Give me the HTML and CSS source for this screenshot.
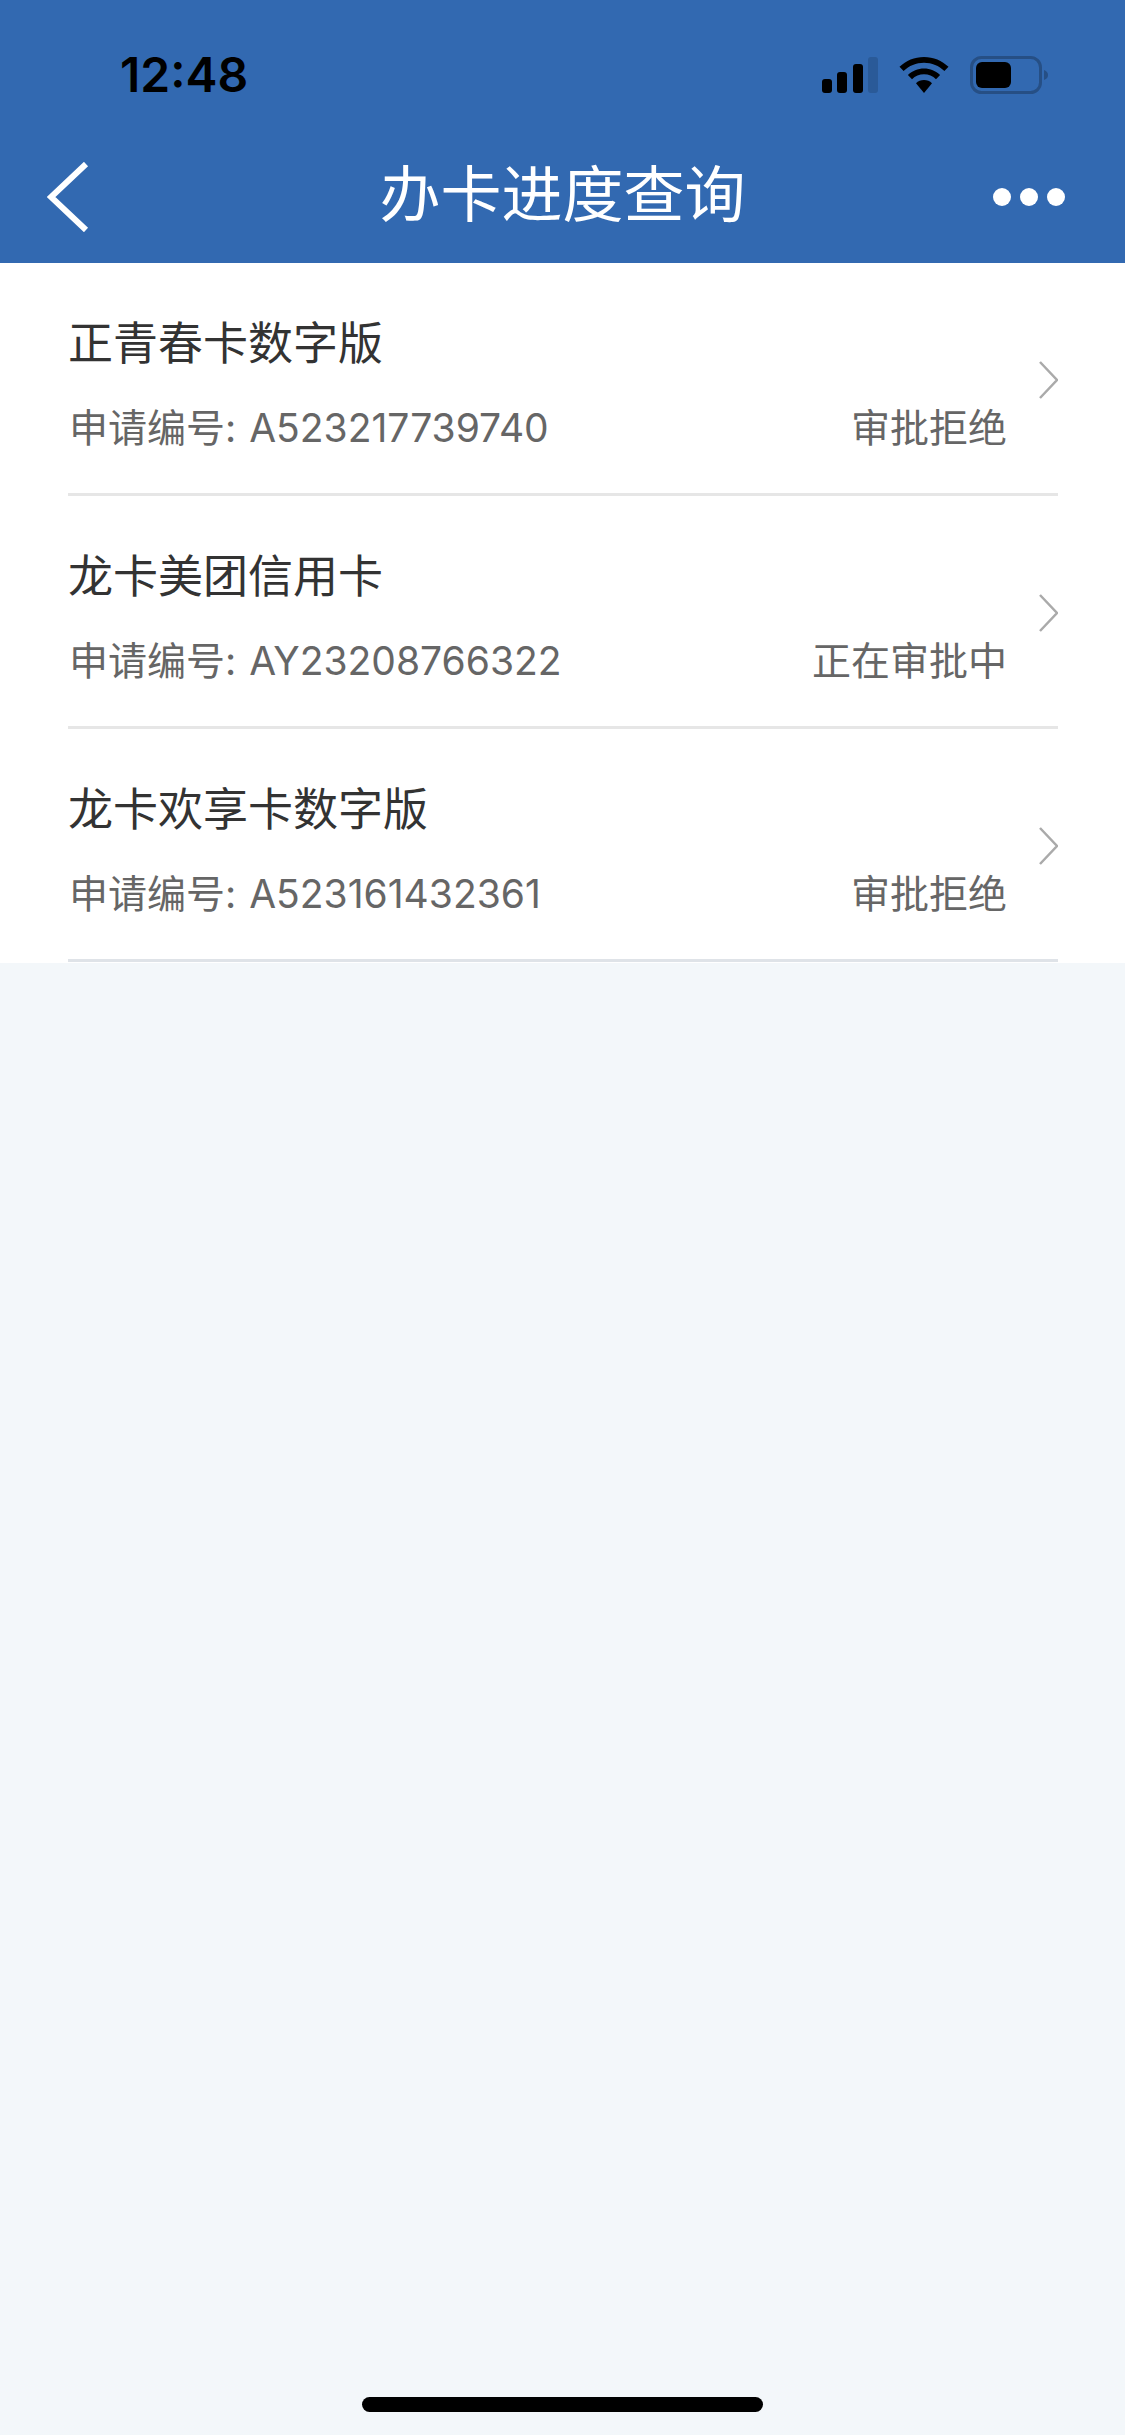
FILE: index.html
```html
<!DOCTYPE html>
<html lang="zh-CN">
<head>
  <meta charset="UTF-8">
  <title>办卡进度查询</title>
  <link rel="stylesheet" href="styles.css">
</head>
<body>
  <div class="page">
    <header class="header">
      <div class="status-bar">
        <span class="time">12:48</span>
        <div class="status-icons">
          <svg class="signal" width="56" height="36" viewBox="0 0 56 36">
            <rect x="0" y="22" width="10" height="14" rx="3" fill="#000"/>
            <rect x="15" y="15" width="10" height="21" rx="3" fill="#000"/>
            <rect x="31" y="7" width="10" height="29" rx="3" fill="#000"/>
            <rect x="46" y="0" width="10" height="36" rx="3" fill="#2a5a98"/>
          </svg>
          <svg class="wifi" width="50" height="36" viewBox="0 0 50 36">
            <path d="M25 0C15.500 0 7 3.700 0.500 9.800L4.600 14C10 8.900 17.200 5.800 25 5.800S40 8.900 45.400 14L49.500 9.800C43 3.700 34.500 0 25 0Z" fill="#000"/>
            <path d="M25 11.500C18.800 11.500 13.200 13.900 8.900 18L13 22.200C16.200 19.200 20.400 17.300 25 17.300S33.800 19.200 37 22.200L41.100 18C36.800 13.900 31.200 11.500 25 11.500Z" fill="#000"/>
            <path d="M25 23C21.900 23 19.100 24.100 17 26.200L25 36L33 26.200C30.900 24.100 28.100 23 25 23Z" fill="#000"/>
          </svg>
          <svg class="battery" width="79" height="38" viewBox="0 0 79 38">
            <rect x="1.500" y="1.500" width="69" height="35" rx="10" fill="none" stroke="#264f85" stroke-width="3"/>
            <rect x="6" y="6" width="35" height="26" rx="6" fill="#000"/>
            <path d="M74 14C77 15 78 17 78 19S77 23 74 24Z" fill="#264f85"/>
          </svg>
        </div>
      </div>
      <nav class="nav-bar">
        <svg class="back" width="42" height="70" viewBox="0 0 42 70">
          <path d="M39 2L4 35L39 68" fill="none" stroke="#fff" stroke-width="6"/>
        </svg>
        <h1 class="nav-title">办卡进度查询</h1>
        <div class="more">
          <span class="dot"></span>
          <span class="dot"></span>
          <span class="dot"></span>
        </div>
      </nav>
    </header>

    <ul class="list">
      <li class="item">
        <div class="item-main">
          <div class="item-name">正青春卡数字版</div>
          <div class="item-meta">
            <span class="item-no">申请编号: A523217739740</span>
            <span class="item-state">审批拒绝</span>
          </div>
        </div>
        <svg class="chevron" width="19" height="38" viewBox="0 0 19 38">
          <path d="M1 1L18 19L1 37" fill="none" stroke="#aaa" stroke-width="2.500"/>
        </svg>
      </li>
      <li class="item">
        <div class="item-main">
          <div class="item-name">龙卡美团信用卡</div>
          <div class="item-meta">
            <span class="item-no">申请编号: AY23208766322</span>
            <span class="item-state">正在审批中</span>
          </div>
        </div>
        <svg class="chevron" width="19" height="38" viewBox="0 0 19 38">
          <path d="M1 1L18 19L1 37" fill="none" stroke="#aaa" stroke-width="2.500"/>
        </svg>
      </li>
      <li class="item">
        <div class="item-main">
          <div class="item-name">龙卡欢享卡数字版</div>
          <div class="item-meta">
            <span class="item-no">申请编号: A523161432361</span>
            <span class="item-state">审批拒绝</span>
          </div>
        </div>
        <svg class="chevron" width="19" height="38" viewBox="0 0 19 38">
          <path d="M1 1L18 19L1 37" fill="none" stroke="#aaa" stroke-width="2.500"/>
        </svg>
      </li>
    </ul>

    <div class="home-bar"></div>
  </div>
</body>
</html>
```

FILE: styles.css
```css
* {
  box-sizing: border-box;
}

body {
  margin: 0;
  font-family: "Inter", "Noto Sans CJK SC", sans-serif;
  background: #f3f7fa;
}

.page {
  display: flex;
  flex-direction: column;
  height: 2435px;
  overflow: hidden;
}

.header {
  height: 263px;
  background: #3269b1;
}

.status-bar {
  display: flex;
  justify-content: space-between;
  align-items: center;
  height: 150px;
  padding: 0 76px 0 120px;
}

.time {
  padding-bottom: 2px;
  font-size: 48px;
  font-weight: 600;
  color: #000;
}

.status-icons {
  display: flex;
  align-items: center;
  gap: 21px;
}

.nav-bar {
  display: grid;
  grid-template-columns: 1fr auto 1fr;
  align-items: center;
  height: 94px;
  padding: 0 47px;
}

.back {
  display: block;
}

.nav-title {
  margin: 0;
  padding-bottom: 4px;
  font-size: 61px;
  line-height: 70px;
  font-weight: 400;
  color: #fff;
}

.more {
  display: flex;
  justify-self: end;
  gap: 9px;
  margin-right: 13px;
}

.dot {
  width: 18px;
  height: 18px;
  border-radius: 50%;
  background: #fff;
}

.list {
  list-style: none;
  margin: 0;
  padding: 0 67px 1px 68px;
  background: #fff;
}

.item {
  display: flex;
  align-items: center;
  gap: 32px;
  height: 233px;
  border-bottom: 3px solid #e6e6e6;
}

.item:last-child {
  border-bottom-color: #dfe3e8;
}

.item-main {
  flex: 1;
  padding-top: 12px;
}

.item-name {
  font-size: 45px;
  line-height: 60px;
  color: #333;
}

.item-meta {
  display: flex;
  justify-content: space-between;
  align-items: center;
  margin-top: 27px;
  line-height: 54px;
  color: #666;
}

.item-no {
  margin-left: 1px;
  font-size: 39px;
  word-spacing: 2px;
}

.item-state {
  font-size: 39px;
}

.chevron {
  flex: none;
  margin-top: 4px;
}

.home-bar {
  width: 401px;
  height: 15px;
  margin: auto auto 23px;
  border-radius: 8px;
  background: #000;
}
```
